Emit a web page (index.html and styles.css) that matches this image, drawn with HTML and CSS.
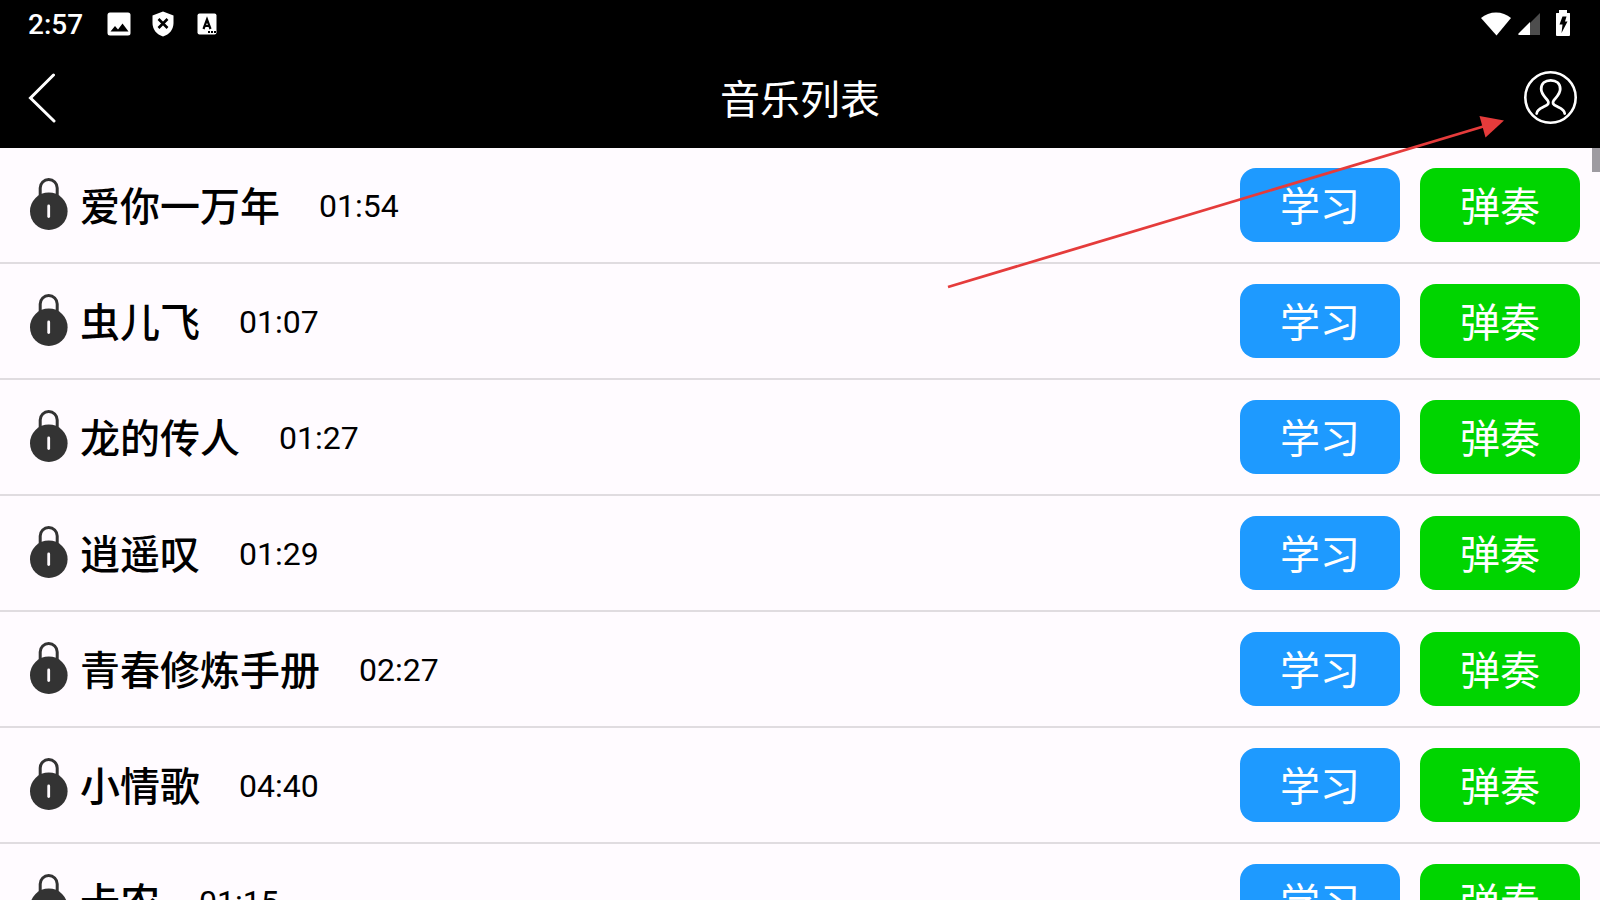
FILE: index.html
```html
<!DOCTYPE html>
<html lang="zh-CN">
<head>
  <meta charset="UTF-8">
  <meta name="viewport" content="width=device-width, initial-scale=1">
  <title>音乐列表</title>
  <link rel="stylesheet" href="styles.css">
</head>
<body>
<svg class="defs" width="0" height="0">
  <symbol id="lock" viewBox="0 0 38 54">
    <path d="M10.500 21V10a8.500 8.500 0 0 1 17 0v11" transform="translate(-.3)" fill="none" stroke="#333" stroke-width="3"/>
    <circle cx="18.800" cy="33.200" r="18.800" fill="#333"/>
    <rect x="17.300" y="26.500" width="2.800" height="13.500" rx="1.400" fill="#fffbff"/>
  </symbol>
</svg>
<div class="app">
  <div class="status">
    <div class="status-left">
      <span class="clock">2:57</span>
      <svg width="24" height="24" viewBox="0 0 24 24">
        <rect x="0.5" y="0.5" width="23" height="23" rx="2.5" fill="#fff"/>
        <path d="M3.5 19.5L8 14l3 3.5 4.500-6 6 8z" fill="#000"/>
      </svg>
      <svg width="24" height="26" viewBox="0 0 24 26">
        <path d="M12 0.500L22.500 4.500V12c0 6.500-4 11.500-10.500 13.500C5.500 23.500 1.500 18.500 1.500 12V4.500z" fill="#fff"/>
        <path d="M7.500 8l9 9M16.500 8l-9 9" stroke="#000" stroke-width="2.600"/>
      </svg>
      <svg width="24" height="22" viewBox="-2 0 24 22">
        <rect x="0.500" y="0.500" width="19" height="21" rx="2" fill="#fff"/>
        <path d="M6.500 16L10 6.500 13.500 16M7.500 13h5" fill="none" stroke="#000" stroke-width="2.200"/>
        <path d="M11 19h2M14 19h2M17 19h2" stroke="#000" stroke-width="2"/>
      </svg>
    </div>
    <div class="status-right">
      <svg width="32" height="26" viewBox="0 0 32 26">
        <path d="M1 7C9-0.500 23-0.500 31 7L16.500 24.500z" fill="#fff"/>
      </svg>
      <svg width="22" height="24" viewBox="0 0 22 24">
        <path d="M22 1v22H12V11z" fill="#4d4d4d"/>
        <path d="M12 10v13H1.500Q-0.500 23 0.500 21.500z" fill="#fff"/>
      </svg>
      <svg class="battery" width="14" height="28" viewBox="0 0 14 28">
        <path d="M3 0h8v3h2.500q.5 0 .5.500V25q0 1-1 1H1q-1 0-1-1V3.500Q0 3 .500 3H3z" fill="#fff"/>
        <path d="M6.500 6.500h4L9 11.500h2.500L5.500 23l1-8.500H3.500z" fill="#000"/>
      </svg>
    </div>
  </div>
  <header class="header">
    <button class="back" type="button" aria-label="返回">
      <svg width="28" height="52" viewBox="0 0 28 52">
        <path d="M25.500 3L2.500 26l23.500 23" fill="none" stroke="#fff" stroke-width="3" stroke-linecap="round"/>
      </svg>
    </button>
    <h1>音乐列表</h1>
    <button class="user" type="button" aria-label="用户">
      <svg width="54" height="54" viewBox="0 0 54 54">
        <circle cx="26.500" cy="26.500" r="25.200" fill="none" stroke="#fff" stroke-width="2.600"/>
        <path d="M12.700 42.500c0-4 4.500-5.500 8-7.200 4-1.800 4.500-3.300 3-5.800-3-4-6.500-6.500-6.500-11.500 0-5.500 4-8.700 9.500-8.700s9.500 3.200 9.500 8.700c0 5-3.500 7.500-6.500 11.500-1.500 2.500-1 4 3 5.800 3.500 1.700 8 3.200 8 7.200" fill="none" stroke="#fff" stroke-width="2.800" stroke-linecap="round"/>
      </svg>
    </button>
  </header>
  <main class="content">
    <ul class="list">
      <li>
        <svg class="lock"><use href="#lock"/></svg>
        <span class="name">爱你一万年</span><span class="time">01:54</span>
        <button class="btn learn" type="button">学习</button>
        <button class="btn play" type="button">弹奏</button>
      </li>
      <li>
        <svg class="lock"><use href="#lock"/></svg>
        <span class="name">虫儿飞</span><span class="time">01:07</span>
        <button class="btn learn" type="button">学习</button>
        <button class="btn play" type="button">弹奏</button>
      </li>
      <li>
        <svg class="lock"><use href="#lock"/></svg>
        <span class="name">龙的传人</span><span class="time">01:27</span>
        <button class="btn learn" type="button">学习</button>
        <button class="btn play" type="button">弹奏</button>
      </li>
      <li>
        <svg class="lock"><use href="#lock"/></svg>
        <span class="name">逍遥叹</span><span class="time">01:29</span>
        <button class="btn learn" type="button">学习</button>
        <button class="btn play" type="button">弹奏</button>
      </li>
      <li>
        <svg class="lock"><use href="#lock"/></svg>
        <span class="name">青春修炼手册</span><span class="time">02:27</span>
        <button class="btn learn" type="button">学习</button>
        <button class="btn play" type="button">弹奏</button>
      </li>
      <li>
        <svg class="lock"><use href="#lock"/></svg>
        <span class="name">小情歌</span><span class="time">04:40</span>
        <button class="btn learn" type="button">学习</button>
        <button class="btn play" type="button">弹奏</button>
      </li>
      <li>
        <svg class="lock"><use href="#lock"/></svg>
        <span class="name">卡农</span><span class="time">01:15</span>
        <button class="btn learn" type="button">学习</button>
        <button class="btn play" type="button">弹奏</button>
      </li>
    </ul>
    <span class="thumb"></span>
  </main>
  <!-- arrow to the user button -->
  <svg class="arrow" width="560" height="180" viewBox="0 0 560 180">
    <path d="M3 172L540 11" stroke="#e53b3b" stroke-width="2.800"/>
    <path d="M559 5.500L534.500 1l6 21.500z" fill="#e53b3b"/>
  </svg>
</div>
</body>
</html>
```
FILE: styles.css
```css
*{margin:0;padding:0;box-sizing:border-box;}
body{background:#fffbff;color:#000;font-family:Roboto,"Noto Sans CJK SC",sans-serif;}
button{border:0;background:none;font-family:inherit;cursor:pointer;}
svg{display:block;flex:none;}
.defs{position:absolute;}
.app{position:relative;height:100vh;display:flex;flex-direction:column;overflow:hidden;}

.status{display:flex;justify-content:space-between;height:48px;padding:0 30px 0 28px;background:#000;color:#fff;}
.status-left,.status-right{display:flex;align-items:center;}
.status-left{gap:20px;}
.status-right{gap:6px;}
.clock{margin-right:4px;padding-top:2px;font-size:28px;line-height:48px;font-weight:500;}
.battery{margin-left:10px;}

.header{display:flex;align-items:center;justify-content:space-between;height:100px;padding:0 22px;background:#000;color:#fff;}
.header button{display:flex;width:54px;}
.header .back{padding-left:6px;}
.header h1{padding-top:6px;font-size:40px;line-height:60px;font-weight:400;}

.content{position:relative;flex:1;min-height:0;}
.list{height:100%;overflow-y:auto;scrollbar-width:none;list-style:none;}
.list li{display:flex;align-items:center;height:116px;padding:0 20px 0 30px;border-bottom:2px solid #e0dce0;}
.lock{width:38px;height:54px;margin-right:12px;}
.name{padding-top:6px;font-size:40px;line-height:60px;font-weight:500;}
.time{margin:0 auto 0 39px;padding-top:2px;font-size:32px;line-height:60px;}
.btn{width:160px;height:74px;padding-top:6px;border-radius:16px;color:#fff;font-size:40px;line-height:60px;}
.learn{background:#1e9aff;}
.play{margin-left:20px;background:#00d500;}
.thumb{position:absolute;top:0;right:0;width:8px;height:24px;background:#9e9ba1;}

.arrow{position:absolute;top:115px;right:95px;pointer-events:none;}
```
